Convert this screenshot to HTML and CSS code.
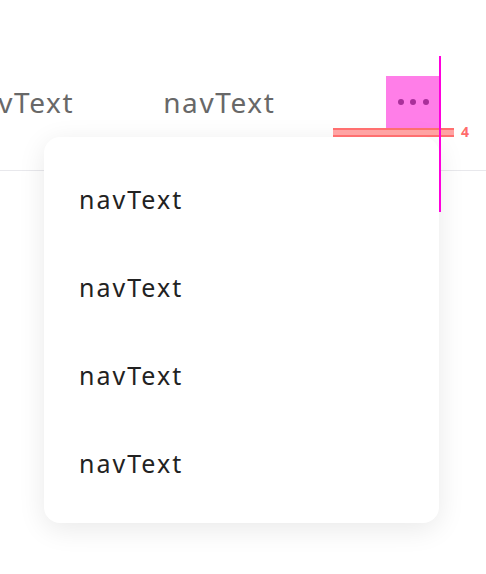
FILE: index.html
```html
<!DOCTYPE html>
<html>
<head>
    <title>Nav More Menu</title>
    <link rel="stylesheet" href="styles.css">
</head>
<body>
    <div class="nav">
        <div class="nav-items">
            <a class="nav-item first">navText</a>
            <a class="nav-item">navText</a>
            <button class="more-btn" aria-label="More">
                <span class="dot"></span><span class="dot"></span><span class="dot"></span>
            </button>
        </div>
    </div>

    <div class="dropdown">
        <div class="dropdown-item">navText</div>
        <div class="dropdown-item">navText</div>
        <div class="dropdown-item">navText</div>
        <div class="dropdown-item">navText</div>
    </div>

    <!-- spacing annotations -->
    <div class="gap-mark"></div>
    <div class="gap-label">4</div>
    <div class="edge-guide"></div>
</body>
</html>
```

FILE: styles.css
```css
body {
    margin: 0;
    background: #fff;
    font-family: "Noto Sans", "Open Sans", sans-serif;
    overflow: hidden;
}

.nav {
    height: 171px;
    box-sizing: border-box;
    padding: 76px 46px 0 0;
    border-bottom: 1px solid #e8e8ec;
    overflow: hidden;
}

.nav-items {
    display: flex;
    align-items: center;
    height: 52px;
}

.nav-item {
    font-size: 28px;
    letter-spacing: 1.6px;
    line-height: 52px;
    color: #686868;
    white-space: nowrap;
    margin-right: 89px;
}

.nav-item.first {
    margin-left: -38px;
}

.more-btn {
    width: 54px;
    height: 52px;
    margin-left: auto;
    border: none;
    padding: 0;
    background: #ff7ee8;
    display: flex;
    align-items: center;
    justify-content: center;
    gap: 6.5px;
}

.dot {
    width: 6px;
    height: 6px;
    border-radius: 50%;
    background: #a9309a;
}

.dropdown {
    position: absolute;
    left: 44px;
    top: 137px;
    width: 395px;
    box-sizing: border-box;
    padding: 18px 0 16px;
    background: #fff;
    border-radius: 16px;
    box-shadow: 0 6px 28px rgba(0, 0, 0, 0.09);
}

.dropdown-item {
    height: 88px;
    line-height: 88px;
    padding-left: 35px;
    font-size: 25px;
    letter-spacing: 2px;
    color: #222;
}

.gap-mark {
    position: absolute;
    left: 333px;
    top: 128px;
    width: 121px;
    height: 5px;
    background: #ffa3a3;
    border-top: 2px solid #ff6f6f;
    border-bottom: 2px solid #ff6f6f;
}

.gap-label {
    position: absolute;
    left: 461px;
    top: 122px;
    font-size: 14px;
    font-weight: bold;
    color: #ff6b6b;
}

.edge-guide {
    position: absolute;
    left: 439px;
    top: 56px;
    width: 2px;
    height: 156px;
    background: #ff00dd;
}
```
